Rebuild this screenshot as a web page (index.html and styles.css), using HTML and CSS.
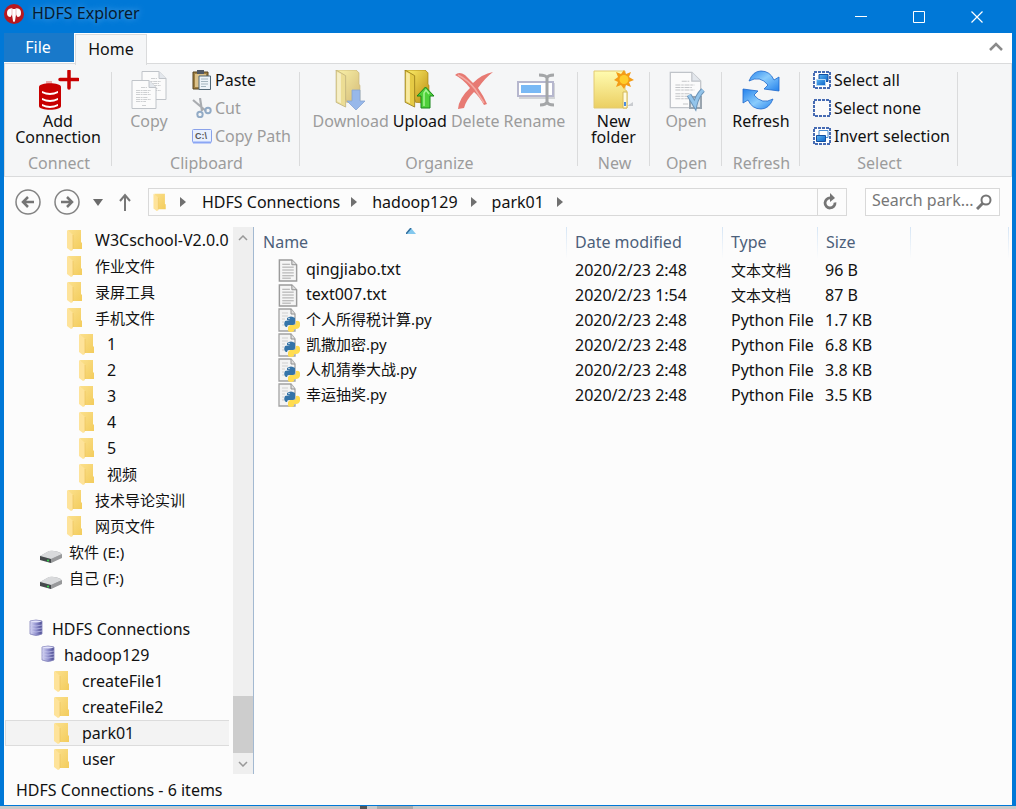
FILE: index.html
```html
<!DOCTYPE html>
<html lang="zh-CN">
<head>
<meta charset="utf-8">
<title>HDFS Explorer</title>
<link rel="stylesheet" href="styles.css">
</head>
<body>
<svg class="sprite" aria-hidden="true">
  <defs>
    <linearGradient id="gFolder" x1="0" x2="1" y1="0" y2="1"><stop offset="0" stop-color="#fbe08d"/><stop offset="1" stop-color="#f3cc5c"/></linearGradient>
    <linearGradient id="gGold" x1="0" x2="1" y1="0" y2="1"><stop offset="0" stop-color="#fff06a"/><stop offset="1" stop-color="#b98b10"/></linearGradient>
    <linearGradient id="gNew" x1="0" x2="0" y1="0" y2="1"><stop offset="0" stop-color="#fffbb0"/><stop offset="1" stop-color="#ebcf62"/></linearGradient>
    <linearGradient id="gBlue" x1="0" x2="1" y1="0" y2="1"><stop offset="0" stop-color="#2a86ee"/><stop offset=".45" stop-color="#8accfc"/><stop offset="1" stop-color="#2381ec"/></linearGradient>
    <linearGradient id="gDb" x1="0" x2="1"><stop offset="0" stop-color="#dcdcf6"/><stop offset=".5" stop-color="#9292cf"/><stop offset="1" stop-color="#4b4b90"/></linearGradient>
    <linearGradient id="gSel" x1="0" x2="1" y1="0" y2="1"><stop offset="0" stop-color="#5cb4f0"/><stop offset="1" stop-color="#0b62c8"/></linearGradient>
    <symbol id="folder" viewBox="0 0 16 22"><path d="M1 1h13v12l1 1v6H5z" fill="url(#gFolder)"/><path d="M0 1l4 3 2 2v15l-2 1-4-3z" fill="#fee39a"/><path d="M6 6v14" stroke="#efc763" stroke-width=".8"/></symbol>
    <symbol id="db" viewBox="0 0 14 17"><path d="M1 2q6-2 12 0v13q-6 3-12 0z" fill="url(#gDb)" stroke="#8484bb" stroke-width=".8"/><path d="M1 2.500q6-2 12 0-6 2-12 0z" fill="#e4e4fa"/><path d="M1 6q6 2 12 0M1 9q6 2 12 0M1 12q6 2 12 0" fill="none" stroke="#c6c6ec" stroke-width=".7"/></symbol>
    <symbol id="drive" viewBox="0 0 24 14"><path d="M1 6L10 1q6-1 12 2l1 4-11 6-11-4z" fill="#aeb0b3"/><path d="M1 6l9-5q7-1 13 3l-11 5z" fill="#d9dadc"/><path d="M1 6l11 3v4L1 10z" fill="#45494c"/><path d="M12 9l11-5v4l-11 5z" fill="#98999b"/><circle cx="9" cy="10.500" r="1" fill="#35e04c"/></symbol>
    <symbol id="page" viewBox="0 0 20 24"><path d="M1 1h13l5 5v17H1z" fill="#f5f5f5" stroke="#9b9b9b" stroke-width="1.500"/><path d="M14 1v5h5" fill="#ddd" stroke="#8f8f8f"/><path d="M4 5.500h8M4 8.500h12M4 11.500h12M4 14.500h12M4 17.500h12M4 20h9" stroke="#a5a5a5"/></symbol>
    <symbol id="py" viewBox="0 0 22 24"><path d="M1 1h12l4 5v17H1z" fill="#f3f3f3" stroke="#a3a3a3" stroke-width="1.300"/><path d="M13 1v5h4" fill="#ddd" stroke="#909090"/><path d="M4 5h6M4 8h6M4 11h3M4 14h2M4 17h2" stroke="#cfcfcf"/><path d="M9 10q4-3 8 0v5q0 2-2 2h-4q-2 0-2 2H8q-3-2-1-6l5-1H9z" fill="#3574a8"/><path d="M18 13q5-1 4 5-1 3-4 3h-2v2q-3 2-6 0v-4l2-2h4q2 0 2-2z" fill="#ffdc50"/><circle cx="11" cy="10.500" r=".7" fill="#fff"/></symbol>
    <symbol id="doc" viewBox="0 0 26 30"><path d="M1 1h17l7 7v21H1z" fill="#fbfbfb" stroke="#c0c4c9"/><path d="M18 1v7h7" fill="#e3e7ec" stroke="#c0c4c9"/><path d="M10 8h6M5 11h15M5 13h13M5 15h15M5 18h12M5 20h15M5 22h10M11 26h4" stroke="#c3c5c8" stroke-width=".8" stroke-dasharray="4 .6 2 .6"/></symbol>
    <symbol id="goldfolder" viewBox="0 0 28 40"><path d="M1 0h21l3 3v12l1 1v19L12 34z" fill="url(#gGold)" stroke="#a7830f" stroke-width=".8"/><path d="M1 0l10 6v33L1 34z" fill="#e5ca45" stroke="#8f7415" stroke-width=".8"/><path d="M2 2l4 2v31l-4-2z" fill="#f8eaa0"/></symbol>
    <symbol id="chev" viewBox="0 0 10 6"><path d="M1 5l4-4 4 4" fill="none" stroke="currentColor" stroke-width="1.500"/></symbol>
    <symbol id="tri" viewBox="0 0 6 10"><path d="M0 0l6 5-6 5z" fill="#707070"/></symbol>
  </defs>
</svg>

<div class="window">
  <header class="titlebar">
    <svg class="logo" viewBox="0 0 20 20"><circle cx="10" cy="10" r="10" fill="#b8191f"/><path d="M3 9q0-4 3.500-4.500Q8 4 9 5h2q1-1 3-.500Q17 5 17 9q0 4-3.500 4L12 10.500 11 17q-1 2-2 0L8 10.500 6.500 13Q3 13 3 9z" fill="#fff"/><path d="M8 5v6M12 5v6" stroke="#e3a6a8" stroke-width=".7"/></svg>
    <h1 class="title">HDFS Explorer</h1>
    <div class="winbuttons">
      <button aria-label="Minimize"><svg viewBox="0 0 12 12"><path d="M0 5.500h12" stroke="#fff"/></svg></button>
      <button aria-label="Maximize"><svg viewBox="0 0 12 12"><path d="M.5.5h11v11H.5z" fill="none" stroke="#fff"/></svg></button>
      <button aria-label="Close"><svg viewBox="0 0 12 12"><path d="M.5.5l11 11M11.500.5l-11 11" stroke="#fff" stroke-width="1.200"/></svg></button>
    </div>
  </header>

  <div class="client">
    <div class="tabs">
      <button class="tab-file">File</button>
      <button class="tab-home">Home</button>
      <button class="collapse" aria-label="Collapse ribbon"><svg viewBox="0 0 14 9"><path d="M1 8l6-6 6 6" fill="none" stroke="#8a8a8a" stroke-width="2.500"/></svg></button>
    </div>

    <div class="ribbon">
      <section class="group g-connect">
        <div class="items">
          <button class="big"><svg viewBox="0 0 42 42"><path d="M9 11h6v3H9z" fill="#eba9a9"/><path d="M2 17c0-5 22-5 22 0v19c0 5-22 5-22 0z" fill="#c80000"/><path d="M5 21q8 4 16 0v2q-8 4-16 0zM5 28q8 4 16 0v2q-8 4-16 0zM5 34q8 4 16 0v2q-8 4-16 0z" fill="#fff"/><path d="M32 1v17M23 9.500h18" stroke="#c80000" stroke-width="3.500" stroke-linecap="round"/></svg><span>Add<br>Connection</span></button>
        </div>
        <h2>Connect</h2>
      </section>
      <section class="group g-clip">
        <div class="items">
          <button class="big off"><svg viewBox="0 0 42 42"><use href="#doc" x="13" y="0" width="26" height="31"/><use href="#doc" x="3" y="9" width="26" height="31"/></svg><span>Copy</span></button>
          <div class="stack">
            <button class="small"><svg viewBox="0 0 20 20"><path d="M1 2h15v17H1z" fill="#a08042" stroke="#54431f"/><path d="M3 4h11v13H3z" fill="#dcc28a"/><path d="M5 0h7v4H5z" fill="#505963"/><path d="M7 6h11.500v13.500H7z" fill="#edf4f8" stroke="#526977"/><path d="M9 9h7M9 11.500h7M9 14h7M9 16.500h5" stroke="#a4b6bf"/></svg>Paste</button>
            <button class="small off"><svg viewBox="0 0 20 20"><path d="M1 2l13 11M8 0l2 13" stroke="#a9acb0" stroke-width="2.200"/><circle cx="16" cy="12.500" r="2.700" fill="none" stroke="#92abc6" stroke-width="2"/><circle cx="8" cy="16.500" r="2.700" fill="none" stroke="#92abc6" stroke-width="2"/></svg>Cut</button>
            <button class="small off"><svg viewBox="0 0 20 20"><rect x=".5" y="3.500" width="19" height="13" rx="1" fill="#e8f0ff" stroke="#8aa2ea"/><path d="M1 16.500h18" stroke="#8ba6f5" stroke-width="2"/><text x="3" y="13" class="drive-text">C:\</text></svg>Copy Path</button>
          </div>
        </div>
        <h2>Clipboard</h2>
      </section>
      <section class="group g-org">
        <div class="items">
          <button class="big off"><svg viewBox="0 0 42 42"><g opacity=".55"><use href="#goldfolder" x="5" y="0" width="27" height="38"/><path d="M22 20h8v11h5l-9 9-9-9h5z" fill="#4c86e0" stroke="#2e62b4" stroke-width=".8"/></g></svg><span>Download</span></button>
          <button class="big"><svg viewBox="0 0 42 42"><use href="#goldfolder" x="5" y="0" width="27" height="38"/><path d="M22 38h9V26h4l-8.500-9-8.500 9h4z" fill="#4ed03a" stroke="#18851a"/><path d="M25 36V23l2-3 3 4" fill="none" stroke="#a5f492" stroke-width="1.500"/></svg><span>Upload</span></button>
          <button class="big off"><svg viewBox="0 0 42 42"><path d="M1 5q4-4 10 0l8 8Q28 4 39 2q-8 6-15 16 5 7 9 16l-3 1q-5-9-10-13-8 8-10 16l-6 1q1-11 12-21Q9 9 1 5z" fill="#e77a73"/><path d="M4 5q10 5 17 14l9 14" fill="none" stroke="#f3aaa3" stroke-width="1.500"/></svg><span>Delete</span></button>
          <button class="big off"><svg viewBox="0 0 42 42"><path d="M6 13h36v16H6z" fill="#d2d4d7"/><path d="M5 12h35v14H5z" fill="#fff" stroke="#b6b7ce" stroke-width="2"/><path d="M8 15h20v8H8z" fill="#79b9f5"/><path d="M26 5q7 0 8 3 1-3 7-3M34 7v26M27 35q6 0 7-3 1 3 7 3" fill="none" stroke="#a4a6a8" stroke-width="3"/></svg><span>Rename</span></button>
        </div>
        <h2>Organize</h2>
      </section>
      <section class="group g-new">
        <div class="items">
          <button class="big"><svg viewBox="0 0 42 42"><path d="M35 36l6-4v4z" fill="#c9ccd0"/><path d="M2 1h31v19l2 1v17H2z" fill="url(#gNew)" stroke="#e2ca73"/><path d="M31 22h4v16h-4z" fill="#fffbe0" stroke="#d4b95a"/><path d="M33 32v4" stroke="#4a8be0" stroke-width="2"/><path d="M32 0l2 4 5-2-2 5 5 3-5 2 2 5-5-2-2 4-3-4-5 2 2-5-4-2 4-3-2-5 5 2z" fill="#f49c16"/><circle cx="32" cy="9.500" r="4.500" fill="#ffcd2b"/></svg><span>New<br>folder</span></button>
        </div>
        <h2>New</h2>
      </section>
      <section class="group g-open">
        <div class="items">
          <button class="big off"><svg viewBox="0 0 42 42"><use href="#doc" x="4" y="1" width="33" height="38"/><path d="M25 27h11v11H25z" fill="#dfe5ea" stroke="#9aa5af" stroke-width="2"/><path d="M24 25l6 10q2-9 8-15" fill="none" stroke="#6b94b8" stroke-width="5"/><path d="M24 25l6 10q2-9 8-15" fill="none" stroke="#93c4ea" stroke-width="3"/></svg><span>Open</span></button>
        </div>
        <h2>Open</h2>
      </section>
      <section class="group g-refresh">
        <div class="items">
          <button class="big"><svg viewBox="0 0 42 42"><g fill="url(#gBlue)" stroke="#1e68cc" stroke-width=".8"><path d="M9 11Q13 1 21 1q9 0 13 9l5-3v14l-15-2 4-4Q20 5 9 11z"/><path transform="rotate(180 21 20)" d="M9 11Q13 1 21 1q9 0 13 9l5-3v14l-15-2 4-4Q20 5 9 11z"/></g></svg><span>Refresh</span></button>
        </div>
        <h2>Refresh</h2>
      </section>
      <section class="group g-select">
        <div class="items">
          <div class="stack">
            <button class="small"><svg viewBox="0 0 18 18"><path d="M1 1h16v16H1z" fill="#fff" stroke="#0b3c9c" stroke-width="1.500" stroke-dasharray="3 1"/><path d="M6 3.500h9v7H6z" fill="url(#gSel)" stroke="#1450a0"/><path d="M3.500 8.500h9v6h-9z" fill="url(#gSel)" stroke="#b7daf5"/></svg>Select all</button>
            <button class="small"><svg viewBox="0 0 18 18"><path d="M1 1h16v16H1z" fill="#fbfbfb" stroke="#0b3c9c" stroke-width="1.500" stroke-dasharray="3 1"/></svg>Select none</button>
            <button class="small"><svg viewBox="0 0 18 18"><path d="M1 1h16v16H1z" fill="#fff" stroke="#0b3c9c" stroke-width="1.500" stroke-dasharray="3 1"/><path d="M6 3.500h9v7H6z" fill="#fff" stroke="#4b8ed2"/><path d="M3.500 8.500h9v6h-9z" fill="url(#gSel)" stroke="#1450a0"/></svg>Invert selection</button>
          </div>
        </div>
        <h2>Select</h2>
      </section>
    </div>

    <div class="navbar">
      <button class="round" aria-label="Back"><svg viewBox="0 0 26 26"><circle cx="13" cy="13" r="12" fill="none" stroke="#838383" stroke-width="1.500"/><path d="M19 13H8M13 8l-5 5 5 5" fill="none" stroke="#757575" stroke-width="2.500"/></svg></button>
      <button class="round" aria-label="Forward"><svg viewBox="0 0 26 26"><circle cx="13" cy="13" r="12" fill="none" stroke="#838383" stroke-width="1.500"/><path d="M7 13h11M13 8l5 5-5 5" fill="none" stroke="#757575" stroke-width="2.500"/></svg></button>
      <button class="hist" aria-label="Recent locations"><svg viewBox="0 0 10 7"><path d="M0 0h10L5 7z" fill="#6b6b6b"/></svg></button>
      <button class="up" aria-label="Up"><svg viewBox="0 0 12 18"><path d="M6 18V2M1 8l5-6 5 6" fill="none" stroke="#777" stroke-width="2"/></svg></button>
      <div class="address">
        <svg class="afolder"><use href="#folder"/></svg>
        <svg class="sep"><use href="#tri"/></svg>
        <a href="#hdfs">HDFS Connections</a>
        <svg class="sep"><use href="#tri"/></svg>
        <a href="#hadoop129">hadoop129</a>
        <svg class="sep"><use href="#tri"/></svg>
        <a href="#park01">park01</a>
        <svg class="sep"><use href="#tri"/></svg>
        <button class="reload" aria-label="Reload"><svg viewBox="0 0 14 18"><path d="M12 9.500A5 5 0 1 1 7.500 5" fill="none" stroke="#757575" stroke-width="2.800"/><path d="M7 0l5 5-5 4z" fill="#757575"/></svg></button>
      </div>
      <div class="search">
        <input type="text" placeholder="Search park..." aria-label="Search park01">
        <svg viewBox="0 0 16 16"><circle cx="10" cy="6" r="4.500" fill="none" stroke="#757575" stroke-width="2"/><path d="M7 9l-6 6" stroke="#757575" stroke-width="3"/></svg>
      </div>
    </div>

    <main class="main">
      <aside class="sidebar">
        <nav class="tree">
          <button class="row l4"><svg class="fo"><use href="#folder"/></svg>W3Cschool-V2.0.0</button>
          <button class="row l4 cjk"><svg class="fo"><use href="#folder"/></svg>作业文件</button>
          <button class="row l4 cjk"><svg class="fo"><use href="#folder"/></svg>录屏工具</button>
          <button class="row l4 cjk"><svg class="fo"><use href="#folder"/></svg>手机文件</button>
          <button class="row l5"><svg class="fo"><use href="#folder"/></svg>1</button>
          <button class="row l5"><svg class="fo"><use href="#folder"/></svg>2</button>
          <button class="row l5"><svg class="fo"><use href="#folder"/></svg>3</button>
          <button class="row l5"><svg class="fo"><use href="#folder"/></svg>4</button>
          <button class="row l5"><svg class="fo"><use href="#folder"/></svg>5</button>
          <button class="row l5 cjk"><svg class="fo"><use href="#folder"/></svg>视频</button>
          <button class="row l4 cjk"><svg class="fo"><use href="#folder"/></svg>技术导论实训</button>
          <button class="row l4 cjk"><svg class="fo"><use href="#folder"/></svg>网页文件</button>
          <button class="row l2 cjk"><svg class="dr"><use href="#drive"/></svg>软件 (E:)</button>
          <button class="row l2 cjk"><svg class="dr"><use href="#drive"/></svg>自己 (F:)</button>
          <button class="row l1 root"><svg class="dbi"><use href="#db"/></svg>HDFS Connections</button>
          <button class="row l2 host"><svg class="dbi"><use href="#db"/></svg>hadoop129</button>
          <button class="row l3"><svg class="fo"><use href="#folder"/></svg>createFile1</button>
          <button class="row l3"><svg class="fo"><use href="#folder"/></svg>createFile2</button>
          <button class="row l3 current"><svg class="fo"><use href="#folder"/></svg>park01</button>
          <button class="row l3"><svg class="fo"><use href="#folder"/></svg>user</button>
        </nav>
        <div class="scroll">
          <button aria-label="Scroll up"><svg><use href="#chev"/></svg></button>
          <div class="track"><div class="thumb"></div></div>
          <button class="down" aria-label="Scroll down"><svg><use href="#chev"/></svg></button>
        </div>
      </aside>
      <section class="files">
        <table>
          <colgroup><col class="c-name"><col class="c-date"><col class="c-type"><col class="c-size"><col><col class="c-end"></colgroup>
          <thead><tr><th class="sorted">Name<svg viewBox="0 0 10 6"><path d="M0 6l5-6 5 6z" fill="#83c8ee"/><path d="M0 6l5-6" stroke="#336e9c" stroke-width="1.500"/></svg></th><th>Date modified</th><th>Type</th><th>Size</th><th></th><th></th></tr></thead>
          <tbody>
            <tr><td><div class="name"><svg class="pg"><use href="#page"/></svg><span>qingjiabo.txt</span></div></td><td>2020/2/23 2:48</td><td class="cjk">文本文档</td><td>96 B</td><td></td><td></td></tr>
            <tr><td><div class="name"><svg class="pg"><use href="#page"/></svg><span>text007.txt</span></div></td><td>2020/2/23 1:54</td><td class="cjk">文本文档</td><td>87 B</td><td></td><td></td></tr>
            <tr><td><div class="name cjk"><svg class="pyi"><use href="#py"/></svg><span>个人所得税计算.py</span></div></td><td>2020/2/23 2:48</td><td>Python File</td><td>1.7 KB</td><td></td><td></td></tr>
            <tr><td><div class="name cjk"><svg class="pyi"><use href="#py"/></svg><span>凯撒加密.py</span></div></td><td>2020/2/23 2:48</td><td>Python File</td><td>6.8 KB</td><td></td><td></td></tr>
            <tr><td><div class="name cjk"><svg class="pyi"><use href="#py"/></svg><span>人机猜拳大战.py</span></div></td><td>2020/2/23 2:48</td><td>Python File</td><td>3.8 KB</td><td></td><td></td></tr>
            <tr><td><div class="name cjk"><svg class="pyi"><use href="#py"/></svg><span>幸运抽奖.py</span></div></td><td>2020/2/23 2:48</td><td>Python File</td><td>3.5 KB</td><td></td><td></td></tr>
          </tbody>
        </table>
      </section>
    </main>
    <footer class="status">HDFS Connections - 6 items</footer>
  </div>
  <div class="desktop"><i></i><b></b></div>
</div>
</body>
</html>
```

FILE: styles.css
```css
* { box-sizing: border-box; }
body { margin: 0; font: 16px/20px "Noto Sans", "Noto Sans CJK SC", sans-serif; color: #111; }
button { font: inherit; color: inherit; background: none; border: 0; padding: 0; margin: 0; }
svg { display: block; flex: none; }
a { color: inherit; text-decoration: none; }
.sprite { position: absolute; width: 0; height: 0; }

.window { min-height: 100vh; display: flex; flex-direction: column; background: #0078d7; }
.titlebar { display: flex; height: 33px; padding-left: 4px; }
.logo { width: 20px; height: 20px; margin-top: 4px; }
.title { margin: 3px 0 0 8px; font-size: 16px; line-height: 20px; font-weight: 400; color: #061a2e; text-shadow: 0 0 6px #6db3ee; }
.winbuttons { display: flex; margin-left: auto; padding-right: 10px; }
.winbuttons button { width: 58px; display: grid; place-items: center; }
.winbuttons svg { width: 12px; height: 12px; }

.client { flex: 1; display: flex; flex-direction: column; margin: 0 4px; background: #fcfcfc; }
.tabs { display: flex; height: 30px; background: #fff; }
.tab-file { width: 70px; height: 29px; padding: 0 2px 1px 0; background: #1979ca; color: #fff; }
.tab-home { width: 72px; height: 31px; padding-bottom: 2px; margin: 1px 0 -1px 1px; background: #f5f6f7; border: 1px solid #dadbdc; border-bottom: 0; z-index: 1; }
.collapse { margin-left: auto; padding: 0 9px 4px; }
.collapse svg { width: 14px; height: 9px; }

.ribbon { display: flex; height: 114px; padding: 8px 0 10px; background: #f5f6f7; border: 1px solid #dadbdc; }
.group { display: flex; flex-direction: column; border-right: 1px solid #dadbdc; }
.g-connect { width: 107px; }
.g-clip { width: 188px; }
.g-org { width: 278px; }
.g-new, .g-open { width: 72px; }
.g-refresh { width: 78px; }
.g-select { width: 158px; }
.items { flex: none; display: flex; justify-content: center; height: 81px; }
.group h2 { margin: 0; padding-left: 2px; font-size: 16px; line-height: 20px; font-weight: 400; text-align: center; color: #9c9c9c; }
.big { display: flex; flex-direction: column; align-items: center; align-self: flex-start; line-height: 16px; }
.big svg { width: 42px; height: 42px; margin-top: -2px; }
.big span { margin-top: 1px; }
.off { color: #9c9c9c; }
.g-clip .items { justify-content: flex-start; padding-left: 16px; gap: 22px; }
.g-org .items { gap: 4px; padding-left: 1px; }
.g-open .items, .g-refresh .items { padding-left: 1px; }
.stack { display: flex; flex-direction: column; margin-top: -6px; }
.g-select .items { justify-content: flex-start; padding-left: 13px; }
.small { display: flex; align-items: center; gap: 3px; height: 28px; white-space: nowrap; }
.small svg { width: 20px; height: 20px; }
.g-select .small svg { width: 18px; height: 18px; }
.drive-text { font: 700 9px "Liberation Sans", sans-serif; fill: #555; }

.navbar { display: flex; align-items: center; height: 50px; padding: 0 12px 0 11px; }
.round { margin-right: 13px; }
.round svg { width: 26px; height: 26px; }
.hist svg { width: 10px; height: 7px; }
.up { margin: 0 17px 0 16px; }
.up svg { width: 12px; height: 18px; }
.address { flex: 1; display: flex; align-items: center; height: 28px; border: 1px solid #d9d9d9; padding-left: 4px; }
.afolder { width: 14px; height: 18px; margin-right: 13px; }
.sep { width: 6px; height: 10px; }
.address a { margin: 0 11px 0 16px; }
.address a ~ a { margin: 0 13px 0 15px; }
.reload { margin-left: auto; width: 29px; align-self: stretch; border-left: 1px solid #d9d9d9; display: grid; place-items: center; padding-right: 4px; }
.reload svg { width: 14px; height: 18px; }
.search { display: flex; align-items: center; width: 135px; height: 28px; margin-left: 18px; border: 1px solid #d9d9d9; padding: 0 7px 0 6px; background: #fff; }
.search input { flex: 1; min-width: 0; border: 0; padding: 0 0 4px; background: none; font: inherit; outline: 0; }
.search input::placeholder { color: #777; opacity: 1; }
.search svg { width: 16px; height: 16px; }

.main { flex: 1; display: flex; }
.sidebar { width: 250px; display: flex; }
.tree { flex: 1; min-width: 0; padding: 0 4px 0 1px; }
.row { display: flex; align-items: center; width: 100%; height: 26px; border: 1px solid transparent; white-space: nowrap; text-align: left; }
.row.current { background: #f3f3f3; border-color: #dcdcdc; border-right: 0; }
.root { margin-top: 25px; }
.l1 { padding-left: 23px; }
.l2 { padding-left: 34px; }
.l2.host { padding-left: 35px; }
.l3 { padding-left: 48px; }
.l4 { padding-left: 61px; }
.l5 { padding-left: 73px; }
.cjk { font-size: 15px; }
.fo { width: 16px; height: 22px; margin-right: 12px; }
.dr { width: 24px; height: 14px; margin: 10px 6px 0 -1px; }
.dbi { width: 14px; height: 17px; margin: 0 9px 4px 0; }
.scroll { width: 21px; display: flex; flex-direction: column; background: #efefef; border-right: 1px solid #a3b9d1; }
.scroll button { height: 21px; display: grid; place-items: center; color: #999; }
.scroll svg { width: 10px; height: 6px; }
.scroll .down svg { transform: rotate(180deg); }
.track { flex: 1; display: flex; flex-direction: column; justify-content: flex-end; }
.thumb { height: 57px; background: #cdcdcd; }

.files { flex: 1; min-width: 0; }
table { width: 100%; table-layout: fixed; border-collapse: separate; border-spacing: 0; }
.c-name { width: 313px; }
.c-date { width: 156px; }
.c-type { width: 95px; }
.c-size { width: 93px; }
.c-end { width: 3px; }
th { position: relative; height: 31px; padding: 0 0 1px 8px; font-weight: 400; text-align: left; color: #4c607a; border-right: 1px solid; border-image: linear-gradient(#d5e5f5, #fcfcfc) 1; }
th:first-child { padding-left: 9px; }
th:last-child { border: 0; padding: 0; }
.sorted svg { position: absolute; top: 1px; left: 50%; width: 10px; height: 6px; margin-left: -4px; }
td { height: 25px; padding: 0 0 1px 8px; white-space: nowrap; }
td:nth-child(4) { padding-left: 7px; }
td:last-child { padding: 0; }
.name { display: flex; align-items: center; height: 24px; padding-left: 16px; }
.name span { padding-bottom: 3px; }
.pg { width: 20px; height: 23px; margin-right: 8px; }
.pyi { width: 22px; height: 24px; margin-right: 6px; }
.status { height: 31px; padding: 6px 12px; }
.desktop { display: flex; height: 4px; border-top: 1px solid #0078d7; background: #cacaca; padding-left: 360px; gap: 10px; }
.desktop i { width: 7px; height: 3px; background: #555; }
.desktop b { width: 36px; height: 3px; background: #aaa; }
```
